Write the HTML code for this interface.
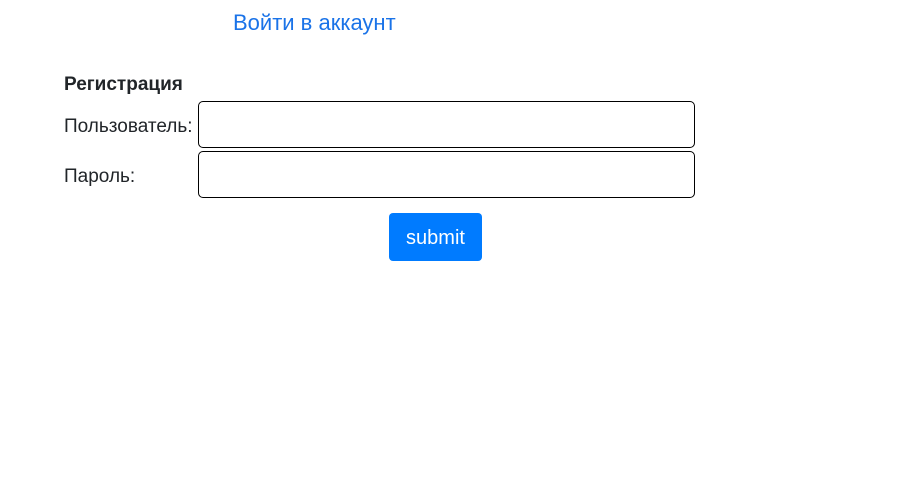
<!DOCTYPE html>
<html><head><meta charset="utf-8"><style>
body{margin:0;background:#fff;font-family:"Liberation Sans","DejaVu Sans",sans-serif;color:#212529;width:912px;height:477px;position:relative;overflow:hidden}
.a{position:absolute;left:233px;top:10px;font-size:22px;color:#1a73e8;white-space:nowrap}
.t{position:absolute;left:64px;top:74px;font-size:19px;font-weight:bold}
.l{position:absolute;left:64px;font-size:19px;white-space:nowrap}
.i{position:absolute;left:198px;width:497px;border:1px solid #000;border-radius:5px;box-sizing:border-box}
.b{position:absolute;left:389px;top:213px;width:93px;height:48px;background:#007bff;border-radius:4px;color:#fff;font-size:20px;text-align:center;line-height:50px}
</style></head><body>
<div class="a">Войти в аккаунт</div>
<div class="t">Регистрация</div>
<div class="l" style="top:116px">Пользователь:</div>
<div class="i" style="top:101px;height:47px"></div>
<div class="l" style="top:166px">Пароль:</div>
<div class="i" style="top:151px;height:47px"></div>
<div class="b">submit</div>
</body></html>
